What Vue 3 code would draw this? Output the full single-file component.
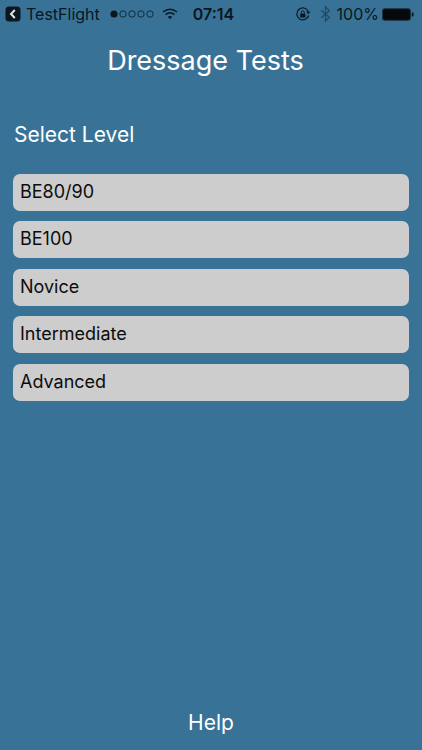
<script setup>
const levels = ['BE80/90', 'BE100', 'Novice', 'Intermediate', 'Advanced']
</script>

<template>
  <div class="screen">
    <div class="status">
      <div class="left">
        <svg class="back" width="16" height="16" viewBox="0 0 16 16">
          <rect x="0.5" y="0.5" width="15" height="15" rx="3.5" fill="#0b1620" />
          <path d="M9.8 4 L6 8 L9.8 12" fill="none" stroke="#dfe6ea" stroke-width="2" />
        </svg>
        <span class="app">TestFlight</span>
        <svg class="dots" width="46" height="10" viewBox="0 0 46 10">
          <circle cx="4" cy="5" r="3.6" fill="#0b1620" />
          <g fill="none" stroke="#0b1620" stroke-width="0.8">
            <circle cx="13" cy="5" r="3.2" />
            <circle cx="22" cy="5" r="3.2" />
            <circle cx="31" cy="5" r="3.2" />
            <circle cx="40" cy="5" r="3.2" />
          </g>
        </svg>
        <svg class="wifi" width="16" height="12" viewBox="0 0 16 12">
          <g fill="none" stroke="#0b1620" stroke-width="1.5">
            <path d="M1 4 Q8 -1.5 15 4" />
            <path d="M3.6 6.6 Q8 3 12.4 6.6" />
          </g>
          <path d="M5.8 8.8 Q8 7 10.2 8.8 L8 11.2 Z" fill="#0b1620" />
        </svg>
      </div>
      <span class="time">07:14</span>
      <div class="right">
        <svg width="16" height="16" viewBox="0 0 16 16">
          <path d="M13.6 9.5 A6 6 0 1 1 13.2 5.2" fill="none" stroke="#0b1620" stroke-width="1.2" />
          <path d="M11.2 5.6 L15.4 5.6 L13.3 8.2 Z" fill="#0b1620" />
          <rect x="5.2" y="7.4" width="5.2" height="4" rx="0.6" fill="#0b1620" />
          <path d="M6.3 7.6 V6.4 A1.5 1.5 0 0 1 9.3 6.4 V7.6" fill="none" stroke="#0b1620" stroke-width="0.9" />
        </svg>
        <svg class="bt" width="11" height="18" viewBox="0 0 10 16">
          <path d="M1 4.5 L8.5 11 L5 14.5 V1.5 L8.5 5 L1 11.5" fill="none" stroke="#234a63" stroke-width="1.2" />
        </svg>
        <span class="pct">100%</span>
        <svg class="battery" width="32" height="13" viewBox="0 0 31 12">
          <rect x="0.5" y="0.5" width="27" height="11" rx="2.2" fill="#05090c" stroke="#1d3240" />
          <path d="M28.8 4 H29.4 A1.2 1.2 0 0 1 30.6 5.2 V6.8 A1.2 1.2 0 0 1 29.4 8 H28.8 Z" fill="#0b1620" />
        </svg>
      </div>
    </div>

    <h1 class="title">Dressage Tests</h1>
    <h2 class="subtitle">Select Level</h2>

    <div class="list">
      <button v-for="level in levels" :key="level" class="item">{{ level }}</button>
    </div>

    <div class="help">Help</div>
  </div>
</template>

<style>
html, body { margin: 0; padding: 0; }
</style>

<style scoped>
.screen {
  width: 422px;
  height: 750px;
  background: #387397;
  display: flex;
  flex-direction: column;
  font-family: Inter, "Liberation Sans", sans-serif;
  overflow: hidden;
}
.status {
  height: 28px;
  display: flex;
  align-items: center;
  justify-content: space-between;
  padding: 0 8px 0 5px;
  color: #0b1620;
  font-size: 16px;
  flex: none;
}
.left, .right {
  display: flex;
  align-items: center;
  width: 175px;
}
.right { justify-content: flex-end; }
.back { margin-right: 5px; }
.dots { margin-left: 10px; }
.wifi { margin-left: 6px; }
.time { font-weight: 600; font-size: 16px; margin-left: 8px; }
.bt { margin-left: 9px; }
.pct { margin-left: 6px; }
.battery { margin-left: 3px; }
.title {
  margin: 16px 0 0;
  font-size: 27px;
  line-height: 34px;
  font-weight: 400;
  color: #fff;
  text-align: center;
  padding-right: 11px;
}
.subtitle {
  margin: 43px 0 0 14px;
  font-size: 21px;
  line-height: 28px;
  font-weight: 400;
  color: #fff;
}
.list {
  margin: 24.75px 13px 0;
  display: flex;
  flex-direction: column;
  gap: 10.5px;
}
.item {
  height: 37px;
  border: none;
  border-radius: 7px;
  background: #cdcdcd;
  color: #0c0c0c;
  font-family: inherit;
  font-size: 18px;
  text-align: left;
  padding: 0 7px 2px;
}
.help {
  margin-top: auto;
  margin-bottom: 14px;
  font-size: 21px;
  line-height: 26px;
  color: #fff;
  text-align: center;
}
</style>
